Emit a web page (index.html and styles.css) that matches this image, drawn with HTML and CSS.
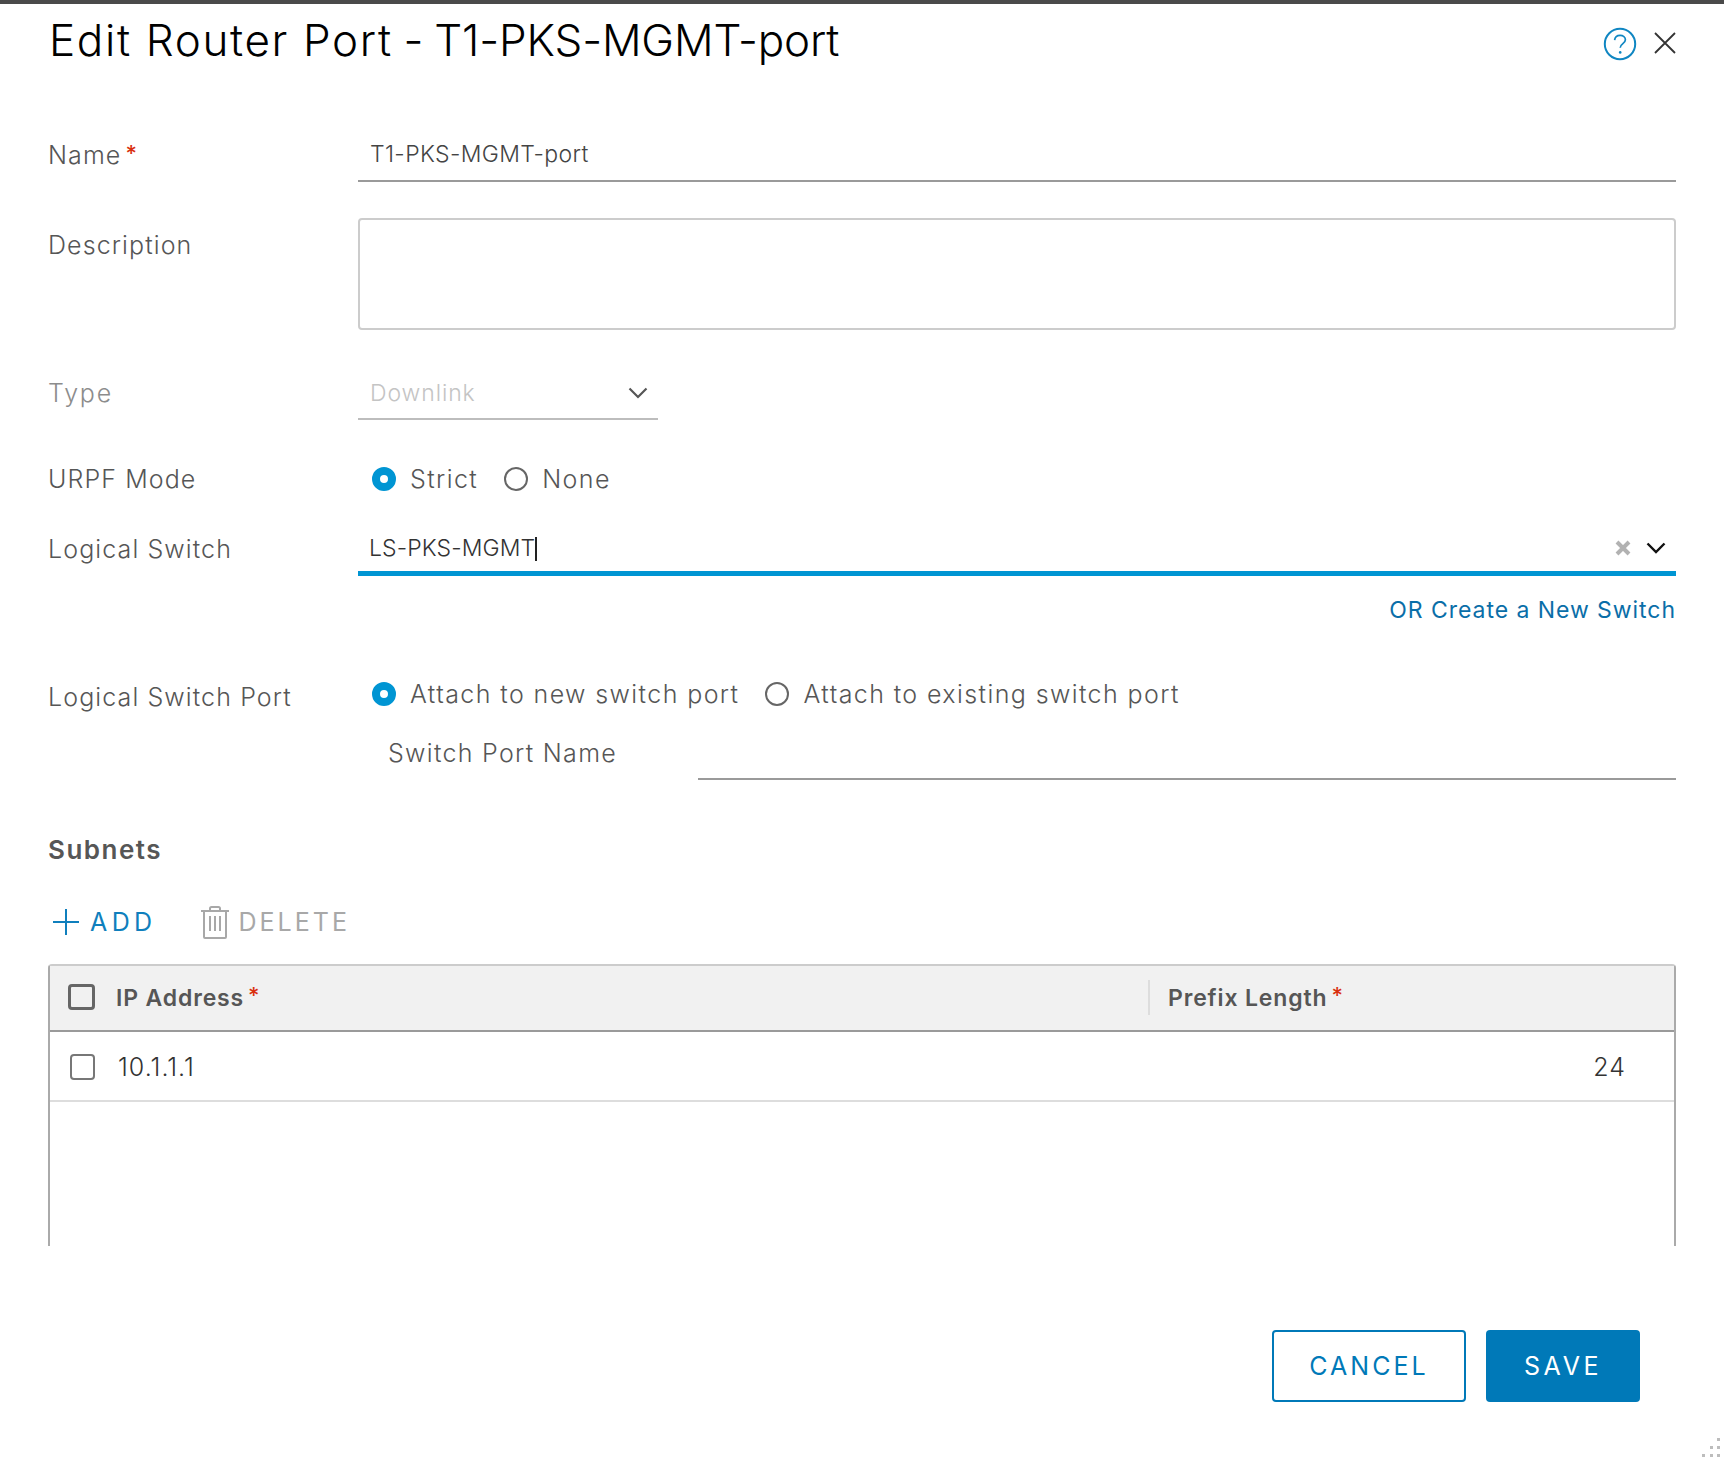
FILE: index.html
```html
<!DOCTYPE html>
<html lang="en">
<head>
    <link rel="stylesheet" href="styles.css">
    <meta charset="UTF-8">
    <title>Edit Router Port</title>
</head>
<body>
    <div class="dialog">
        <header class="dialog-head">
            <h1><span class="title-main">Edit Router Port</span> - <span class="title-name">T1-PKS-MGMT-port</span></h1>
            <div class="head-icons">
                <svg class="icon-help" width="34" height="34" viewBox="0 0 34 34" fill="none">
                    <circle cx="17" cy="17" r="15.2" stroke="#0f86c2" stroke-width="2"/>
                    <path d="M11.6 13.2c.3-3 2.6-4.8 5.5-4.8 3 0 5.3 1.8 5.3 4.4 0 3.9-5.2 3.8-5.2 8" stroke="#0f86c2" stroke-width="1.7"/>
                    <circle cx="17.2" cy="25.4" r="1.3" fill="#0f86c2"/>
                </svg>
                <svg class="icon-close" width="22" height="22" viewBox="0 0 22 22" fill="none">
                    <path d="M1 1l20 20M21 1L1 21" stroke="#333" stroke-width="1.800"/>
                </svg>
            </div>
        </header>

        <form class="form">
            <div class="row row-name">
                <label class="label">Name<span class="req">*</span></label>
                <div class="field input-line">T1-PKS-MGMT-port</div>
            </div>
            <div class="row row-desc">
                <label class="label">Description</label>
                <div class="field textarea"></div>
            </div>
            <div class="row row-type">
                <label class="label label-muted">Type</label>
                <div class="select-disabled">
                    <span>Downlink</span>
                    <svg width="20" height="12" viewBox="0 0 20 12" fill="none"><path d="M1.500 1.500l8.500 8.500 8.500-8.500" stroke="#565656" stroke-width="2.200"/></svg>
                </div>
            </div>
            <div class="row row-urpf">
                <label class="label">URPF Mode</label>
                <div class="radios">
                    <span class="radio radio-on"></span><span class="radio-text">Strict</span>
                    <span class="radio"></span><span class="radio-text">None</span>
                </div>
            </div>
            <div class="row row-switch">
                <label class="label">Logical Switch</label>
                <div class="field combo">
                    <span class="combo-text">LS-PKS-MGMT<span class="caret"></span></span>
                    <svg class="combo-clear" width="16" height="16" viewBox="0 0 16 16" fill="none"><path d="M2 2l12 12M14 2L2 14" stroke="#b2b2b2" stroke-width="4"/></svg>
                    <svg width="20" height="12" viewBox="0 0 20 12" fill="none"><path d="M1.500 1.500l8.500 8.500 8.500-8.500" stroke="#111" stroke-width="2.400"/></svg>
                </div>
            </div>
            <div class="create-link">OR Create a New Switch</div>
            <div class="row row-port">
                <label class="label">Logical Switch Port</label>
                <div class="port-options">
                    <div class="radios">
                        <span class="radio radio-on"></span><span class="radio-text">Attach to new switch port</span>
                        <span class="radio"></span><span class="radio-text">Attach to existing switch port</span>
                    </div>
                    <div class="port-name">
                        <span class="port-name-label">Switch Port Name</span>
                        <div class="port-name-input"></div>
                    </div>
                </div>
            </div>
        </form>

        <h2 class="subnets">Subnets</h2>
        <div class="actions">
            <span class="action action-add">
                <svg width="28" height="28" viewBox="0 0 28 28" fill="none"><path d="M14 1v26M1 14h26" stroke="#0f7fbd" stroke-width="2"/></svg>
                ADD
            </span>
            <span class="action action-delete">
                <svg width="28" height="33" viewBox="0 0 28 33" fill="none" stroke="#a8a8a8" stroke-width="2">
                    <path d="M0 5h28M9 5V2.500q0-1.500 1.500-1.500h7q1.500 0 1.500 1.500V5M3 5v26q0 1 1 1h20q1 0 1-1V5M9 10v15M14 10v15M19 10v15"/>
                </svg>
                DELETE
            </span>
        </div>

        <div class="grid">
            <div class="grid-head">
                <div class="cell-check"><span class="checkbox checkbox-head"></span></div>
                <div class="col-ip">IP Address<span class="req">*</span></div>
                <div class="col-prefix">Prefix Length<span class="req">*</span></div>
            </div>
            <div class="grid-row">
                <div class="cell-check"><span class="checkbox"></span></div>
                <div class="col-ip">10.1.1.1</div>
                <div class="col-value">24</div>
            </div>
        </div>

        <footer class="dialog-foot">
            <button type="button" class="btn btn-outline">CANCEL</button>
            <button type="button" class="btn btn-primary">SAVE</button>
        </footer>
    </div>

    <svg class="resize-grip" width="20" height="20" viewBox="0 0 20 20" fill="#bdbdbd">
        <rect x="15" y="0" width="3" height="3"/>
        <rect x="8" y="8" width="3" height="3"/><rect x="15" y="8" width="3" height="3"/>
        <rect x="0" y="16" width="3" height="3"/><rect x="8" y="16" width="3" height="3"/><rect x="15" y="16" width="3" height="3"/>
    </svg>
</body>
</html>
```

FILE: styles.css
```css
html, body {
    margin: 0;
    height: 100%;
    background-color: #fff;
}

body {
    font-family: Inter, "Open Sans", sans-serif;
    font-weight: 300;
    color: #565656;
    overflow: hidden;
}

.dialog {
    position: relative;
    height: 1460px;
    box-sizing: border-box;
    border-top: 4px solid #4a4a4a;
    padding: 0 48px;
}

.dialog-head {
    display: flex;
    justify-content: space-between;
    height: 100px;
}

h1 {
    margin: 10px 0 0 1px;
    font-size: 44px;
    line-height: 52px;
    font-weight: 300;
    color: #000;
    white-space: nowrap;
    word-spacing: -1.600px;
}

.title-main {
    letter-spacing: 1.650px;
    word-spacing: 0;
}

.title-name {
    letter-spacing: -0.15px;
}

.head-icons {
    display: flex;
    align-items: flex-start;
    gap: 17px;
    padding-top: 23px;
}

.icon-close {
    margin-top: 5px;
}

.row {
    display: flex;
}

.label {
    width: 310px;
    flex-shrink: 0;
    font-size: 25px;
    line-height: 30px;
    letter-spacing: 1.1px;
}

.label-muted {
    color: #8c8c8c;
    letter-spacing: 1.800px;
}

.req {
    margin-left: 4px;
    color: #d9300f;
    font-weight: 500;
    vertical-align: 3px;
    font-size: 22px;
}

.field {
    flex: 1;
    box-sizing: border-box;
}

.input-line {
    height: 78px;
    padding: 35px 12px 0;
    border-bottom: 2px solid #9a9a9a;
    font-size: 23px;
    line-height: 30px;
    letter-spacing: 0.35px;
    color: #444;
}

.row-name {
    height: 114px;
}

.row-name .label {
    padding-top: 34px;
}

.row-desc {
    height: 111px;
}

.row-desc .label {
    padding-top: 12px;
}

.textarea {
    height: 112px;
    border: 2px solid #ccc;
    border-radius: 4px;
}

.row-type {
    margin-top: 30px;
    height: 61px;
}

.row-type .label {
    padding-top: 19px;
}

.select-disabled {
    display: flex;
    justify-content: space-between;
    align-items: center;
    width: 300px;
    height: 61px;
    box-sizing: border-box;
    padding: 8px 10px 0 12px;
    border-bottom: 2px solid #bdbdbd;
    font-size: 23px;
    letter-spacing: 0.9px;
    color: #c4c4c4;
}

.row-urpf {
    margin-top: 39px;
    height: 40px;
    align-items: center;
}

.row-urpf .label {
    padding-top: 0;
}

.radios {
    display: flex;
    align-items: center;
    padding-left: 14px;
    height: 40px;
}

.radio {
    width: 24px;
    height: 24px;
    box-sizing: border-box;
    border: 2px solid #666;
    border-radius: 50%;
    flex-shrink: 0;
}

.radio-on {
    border: 8px solid #0095d3;
}

.radio-text {
    margin-left: 14px;
    margin-right: 26px;
    font-size: 25px;
    letter-spacing: 1.400px;
    color: #565656;
}

.row-switch {
    margin-top: 21px;
}

.row-switch .label {
    padding-top: 14px;
}

.combo {
    display: flex;
    align-items: center;
    height: 56px;
    padding: 5px 10px 0 11px;
    border-bottom: 5px solid #0095d3;
}

.combo-text {
    flex: 1;
    font-size: 23px;
    letter-spacing: 0.1px;
    color: #333;
}

.caret {
    display: inline-block;
    width: 2px;
    height: 24px;
    background-color: #222;
    vertical-align: -5px;
}

.combo-clear {
    margin-right: 15px;
}

.create-link {
    margin-top: 19px;
    height: 31px;
    font-size: 23px;
    line-height: 30px;
    letter-spacing: 0.95px;
    text-align: right;
    color: #0a6ea8;
    font-weight: 400;
}

.row-port {
    margin-top: 48px;
}

.row-port .label {
    padding-top: 8px;
}

.port-options {
    flex: 1;
}

.port-name {
    display: flex;
    margin-top: 24px;
    padding-left: 30px;
}

.port-name-label {
    width: 310px;
    flex-shrink: 0;
    font-size: 25px;
    line-height: 30px;
    letter-spacing: 1.300px;
}

.port-name-input {
    flex: 1;
    height: 40px;
    border-bottom: 2px solid #9a9a9a;
}

.subnets {
    margin: 54px 0 0;
    font-size: 26px;
    line-height: 32px;
    letter-spacing: 1.500px;
    font-weight: 600;
    color: #565656;
}

.actions {
    display: flex;
    gap: 44px;
    margin-top: 36px;
    padding-left: 4px;
    height: 40px;
    align-items: center;
}

.action {
    display: flex;
    align-items: center;
    gap: 10px;
    font-size: 25px;
    font-weight: 400;
}

.action-add {
    color: #0f7fbd;
    letter-spacing: 4.400px;
}

.action-delete {
    color: #a8a8a8;
    letter-spacing: 3px;
}

.grid {
    margin-top: 22px;
    height: 282px;
    box-sizing: border-box;
    border: 2px solid #ccc;
    border-bottom: 0;
    border-radius: 4px 4px 0 0;
    border-left-color: #aaa;
    border-right-color: #aaa;
}

.grid-head {
    display: flex;
    align-items: center;
    height: 66px;
    box-sizing: border-box;
    padding-bottom: 2px;
    border-bottom: 2px solid #9a9a9a;
    background-color: #f1f1f1;
    font-size: 23px;
    letter-spacing: 0.85px;
    font-weight: 600;
    color: #565656;
}

.grid-row {
    display: flex;
    align-items: center;
    height: 70px;
    box-sizing: border-box;
    padding-top: 2px;
    border-bottom: 2px solid #ddd;
    font-size: 25px;
    letter-spacing: 1px;
    color: #333;
}

.cell-check {
    width: 68px;
    padding-left: 20px;
    box-sizing: border-box;
    flex-shrink: 0;
    display: flex;
}

.checkbox {
    width: 25px;
    height: 26px;
    box-sizing: border-box;
    border: 2px solid #777;
    border-radius: 4px;
}

.grid-head .cell-check {
    width: 66px;
    padding-left: 18px;
}

.checkbox-head {
    width: 27px;
    border-color: #666;
    border-width: 3px;
}

.col-ip {
    flex: 1;
}

.col-prefix {
    width: 526px;
    padding: 0 0 2px 18px;
    box-sizing: border-box;
    border-left: 2px solid #ddd;
    line-height: 30px;
}

.col-value {
    width: 200px;
    text-align: right;
    padding-right: 48px;
    box-sizing: border-box;
}

.dialog-foot {
    display: flex;
    justify-content: flex-end;
    gap: 20px;
    margin-top: 84px;
    padding-right: 36px;
}

.btn {
    height: 72px;
    box-sizing: border-box;
    border-radius: 4px;
    font-family: inherit;
    font-size: 25px;
    font-weight: 400;
}

.btn-outline {
    width: 194px;
    border: 2px solid #0079b8;
    background-color: #fff;
    color: #0079b8;
    letter-spacing: 3px;
}

.btn-primary {
    width: 154px;
    border: 0;
    background-color: #0079b8;
    color: #fff;
    letter-spacing: 3.500px;
}

.resize-grip {
    position: absolute;
    right: 2px;
    bottom: 2px;
}
```
